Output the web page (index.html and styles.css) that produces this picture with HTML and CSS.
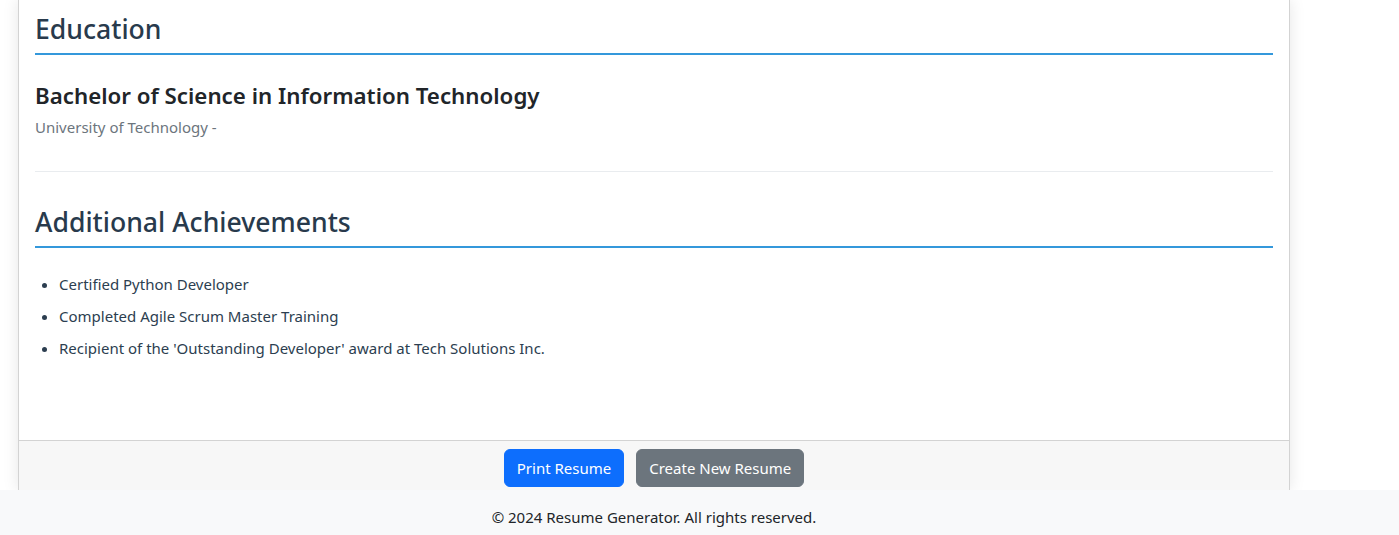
FILE: index.html
```html
<!DOCTYPE html>
<html lang="en">
<head>
<meta charset="utf-8">
<title>Resume</title>
<link rel="stylesheet" href="styles.css">
</head>
<body>
<main class="page">
  <div class="card">
    <div class="card-body">
      <section class="section">
        <h2 class="section-title">Education</h2>
        <div class="entry">
          <h3 class="entry-title">Bachelor of Science in Information Technology</h3>
          <p class="entry-meta">University of Technology - </p>
        </div>
      </section>
      <hr class="divider">
      <section class="section">
        <h2 class="section-title">Additional Achievements</h2>
        <ul class="achievements">
          <li>Certified Python Developer</li>
          <li>Completed Agile Scrum Master Training</li>
          <li>Recipient of the 'Outstanding Developer' award at Tech Solutions Inc.</li>
        </ul>
      </section>
    </div>
    <div class="card-footer">
      <button class="btn btn-primary" type="button">Print Resume</button>
      <button class="btn btn-secondary" type="button">Create New Resume</button>
    </div>
  </div>
</main>
<footer class="site-footer">
  <div class="footer-inner">&copy; 2024 Resume Generator. All rights reserved.</div>
</footer>
</body>
</html>
```

FILE: styles.css
```css
* { box-sizing: border-box; }

html, body {
  margin: 0;
  padding: 0;
}

body {
  background: #ffffff;
  color: #212529;
  font-family: "Noto Sans", "Open Sans", sans-serif;
  font-size: 15px;
  line-height: 1.5;
  overflow: hidden;
}

.page {
  padding-left: 18px;
}

.card {
  width: 1272px;
  background: #fff;
  border-left: 1px solid #d3d3d3;
  border-right: 1px solid #d3d3d3;
  box-shadow: 0 0 15px rgba(0, 0, 0, 0.1);
}

.card-body {
  padding: 0 16px 0 16px;
}

.section-title {
  margin: 0;
  padding-top: 12px;
  padding-bottom: 7px;
  font-size: 26.6px;
  line-height: 34px;
  font-weight: 500;
  color: #283a4c;
  border-bottom: 2px solid #3498db;
}

.entry {
  padding-top: 26px;
}

.entry-title {
  margin: 0 0 5px;
  font-size: 22.3px;
  line-height: 29px;
  font-weight: 600;
  color: #212529;
}

.entry-meta {
  margin: 0;
  color: #6c757d;
  font-size: 15px;
  line-height: 24px;
}

.divider {
  margin: 32px 0 0;
  border: 0;
  border-top: 1px solid #e9ecef;
}

.divider + .section .section-title {
  padding-top: 33px;
}

.achievements {
  margin: 24px 0 0;
  padding: 0 0 0 24px;
  color: #2c3e50;
  height: 168px;
}

.achievements li {
  line-height: 24px;
  margin-bottom: 8px;
}

.card-footer {
  height: 50px;
  background: #f7f7f7;
  border-top: 1px solid #d3d3d3;
  display: flex;
  justify-content: center;
  align-items: flex-start;
  gap: 12px;
  padding-top: 8px;
}

.btn {
  font-family: inherit;
  font-size: 15px;
  line-height: 24px;
  height: 38px;
  padding: 6px 12px;
  border: 1px solid transparent;
  border-radius: 6px;
  color: #fff;
  cursor: pointer;
}

.btn-primary {
  background: #0d6efd;
  border-color: #0d6efd;
}

.btn-secondary {
  background: #6c757d;
  border-color: #6c757d;
}

.site-footer {
  background: #f8f9fa;
  height: 45px;
}

.footer-inner {
  width: 1308px;
  text-align: center;
  padding-top: 15px;
  line-height: 24px;
  color: #212529;
}
```
